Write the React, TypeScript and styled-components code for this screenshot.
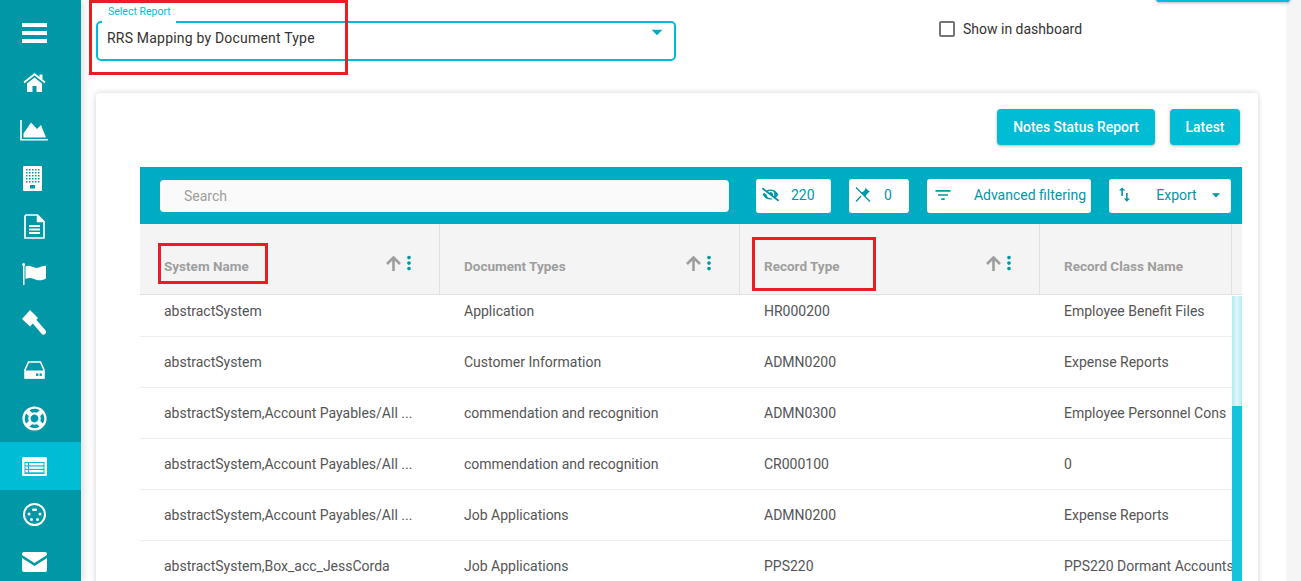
import React from 'react';
import styled, {createGlobalStyle} from 'styled-components';
import {FaRegLifeRing, FaEyeSlash} from 'react-icons/fa';
import {MdFilterList, MdMoreVert, MdSwapVert, MdArrowDropDown} from 'react-icons/md';

interface Row {
    system: string;
    document: string;
    record: string;
    recordClass: string;
}

const rows: Row[] = [
    {system: 'abstractSystem', document: 'Application', record: 'HR000200', recordClass: 'Employee Benefit Files'},
    {system: 'abstractSystem', document: 'Customer Information', record: 'ADMN0200', recordClass: 'Expense Reports'},
    {system: 'abstractSystem,Account Payables/All ...', document: 'commendation and recognition', record: 'ADMN0300', recordClass: 'Employee Personnel Cons'},
    {system: 'abstractSystem,Account Payables/All ...', document: 'commendation and recognition', record: 'CR000100', recordClass: '0'},
    {system: 'abstractSystem,Account Payables/All ...', document: 'Job Applications', record: 'ADMN0200', recordClass: 'Expense Reports'},
    {system: 'abstractSystem,Box_acc_JessCorda', document: 'Job Applications', record: 'PPS220', recordClass: 'PPS220 Dormant Accounts'},
];

const SIDE_BG = '#0097a7';

const BarsIcon = () => (
    <svg width="25" height="20" viewBox="0 0 25 20" fill="#fff">
        <rect width="25" height="4"/>
        <rect y="8" width="25" height="4"/>
        <rect y="16" width="25" height="4"/>
    </svg>
);

const HomeIcon = () => (
    <svg width="23" height="19" viewBox="0 0 23 19" fill="#fff">
        <path d="M4 10.5l7.5-6 7.5 6V19h-5.500v-6h-4v6H4z"/>
        <path d="M1 9.500l10.500-8.300L22 9.500" fill="none" stroke="#fff" strokeWidth="1.800"/>
        <rect x="16.500" y="1.500" width="3" height="4.500"/>
    </svg>
);

const ChartIcon = () => (
    <svg width="28" height="21" viewBox="0 0 28 21" fill="#fff">
        <path d="M1 0v19.700h27" fill="none" stroke="#fff" strokeWidth="1.600"/>
        <path d="M3.500 17.500v-4L11 2.500l6 6.500 4-4 5 12.500z"/>
    </svg>
);

const BuildingIcon = () => (
    <svg width="22" height="25" viewBox="0 0 22 25" fill="#fff">
        <rect width="19" height="25" rx="1"/>
        {[3, 6, 9, 12, 15].map(y =>
            [3, 6, 9, 12, 15].map(x => (
                <rect key={`${x}-${y}`} x={x} y={y} width="1.500" height="1.500" fill={SIDE_BG}/>
            ))
        )}
        <rect x="7" y="19" width="5" height="3.500" fill={SIDE_BG}/>
    </svg>
);

const DocIcon = () => (
    <svg width="21" height="25" viewBox="0 0 21 25" fill="none" stroke="#fff">
        <path d="M2 1h11.500L20 7.500V24H1V2z" strokeWidth="1.700"/>
        <path d="M13 1v7h7z" fill="#fff" strokeWidth="0.500"/>
        <path d="M5 12h11M5 15.500h11M5 19h11" strokeWidth="1.800"/>
    </svg>
);

const FlagIcon = () => (
    <svg width="24" height="22" viewBox="0 0 24 22" fill="#fff">
        <rect x="1" y="1" width="1.500" height="21"/>
        <circle cx="1.700" cy="1.500" r="1.500"/>
        <path d="M3.500 3.500C8 1 12 6.500 17 4.500c2.500-1 4.500-1.500 7-2v13c-3 1.500-7 3-12 .5-3-1.500-5.500-1.500-8.500 0z"/>
    </svg>
);

const GavelIcon = () => (
    <svg width="24" height="25" viewBox="0 0 24 25" fill="#fff">
        <path d="M8 0l8 8-8 8.500L0 9z"/>
        <path d="M12 11l9.500 11" fill="none" stroke="#fff" strokeWidth="5" strokeLinecap="round"/>
    </svg>
);

const HddIcon = () => (
    <svg width="21" height="18" viewBox="0 0 21 18" fill="none">
        <path d="M4.500 1h12L20 9v8H1V9z" stroke="#fff" strokeWidth="1.600"/>
        <rect x="1" y="9.500" width="19" height="8" fill="#fff"/>
        <rect x="12" y="12.500" width="2.400" height="2.400" fill={SIDE_BG}/>
        <rect x="15.500" y="12.500" width="2.400" height="2.400" fill={SIDE_BG}/>
    </svg>
);

const ListIcon = () => (
    <svg width="25" height="19" viewBox="0 0 25 19" fill="#fff">
        <rect width="25" height="19" rx="1.500"/>
        <rect x="2.500" y="5" width="20" height="12" fill="#00bcd4"/>
        {[6, 9.500, 13].map(y => (
            <React.Fragment key={y}>
                <rect x="3.500" y={y} width="2.500" height="2.300"/>
                <rect x="7" y={y} width="14.500" height="2.300"/>
            </React.Fragment>
        ))}
    </svg>
);

const PlugIcon = () => (
    <svg width="23" height="23" viewBox="0 0 23 23" fill="#fff">
        <circle cx="11.500" cy="11.500" r="10.500" fill="none" stroke="#fff" strokeWidth="2"/>
        <rect x="9" y="5.500" width="5" height="2.400" rx="1"/>
        <circle cx="6" cy="11" r="1.500"/>
        <circle cx="17" cy="11" r="1.500"/>
        <circle cx="8.500" cy="16.500" r="1.500"/>
        <circle cx="14.500" cy="16.500" r="1.500"/>
    </svg>
);

const EnvelopeIcon = () => (
    <svg width="25" height="20" viewBox="0 0 25 20" fill="#fff">
        <path d="M2 0h21a2 2 0 0 1 2 2v1L12.500 11 0 3V2a2 2 0 0 1 2-2z"/>
        <path d="M0 6l12.500 8L25 6v12a2 2 0 0 1-2 2H2a2 2 0 0 1-2-2z"/>
    </svg>
);

const UnpinIcon = () => (
    <svg width="16" height="15" viewBox="0 0 16 15" fill="none">
        <path d="M10 .5l5 4.500-1.500.4-2.500 2.500-.5 2-4.500-4.500 2-.6 2.500-2.500z" fill="#0097a7"/>
        <path d="M1 .5l14 14M6 9l-5 5.500" stroke="#0097a7" strokeWidth="1.300"/>
    </svg>
);

const SortArrow = () => (
    <svg width="15" height="15" viewBox="0 0 15 15" fill="none" stroke="#9e9e9e" strokeWidth="2.600">
        <path d="M7.500 15V2M1 8l6.500-6.500L14 8"/>
    </svg>
);

const navIcons = [
    <HomeIcon/>, <ChartIcon/>, <BuildingIcon/>, <DocIcon/>, <FlagIcon/>, <GavelIcon/>,
    <HddIcon/>, <FaRegLifeRing size={25}/>, <ListIcon/>, <PlugIcon/>, <EnvelopeIcon/>,
];

const App: React.FC = () => (
    <Shell>
        <GlobalStyle/>
        <Sidebar>
            <MenuItem><BarsIcon/></MenuItem>
            {navIcons.map((icon, i) => (
                <NavItem key={i} $active={i === 8}>{icon}</NavItem>
            ))}
        </Sidebar>
        <Main>
            <TopButtonEdge/>
            <TopBar>
                <SelectField>
                    <SelectLabel>Select Report</SelectLabel>
                    <SelectValue>RRS Mapping by Document Type</SelectValue>
                    <SelectCaret><MdArrowDropDown/></SelectCaret>
                    <Highlight $left={-9} $top={-23} $width={259} $height={75}/>
                </SelectField>
                <CheckLabel>
                    <CheckBox/>
                    Show in dashboard
                </CheckLabel>
            </TopBar>
            <Card>
                <CardActions>
                    <ActionButton $width={158}>Notes Status Report</ActionButton>
                    <ActionButton $width={70}>Latest</ActionButton>
                </CardActions>
                <Table>
                    <Toolbar>
                        <Search>Search</Search>
                        <ToolButton $width={75} $gap={12}><FaEyeSlash size={17}/>220</ToolButton>
                        <ToolButton $width={60} $gap={13}><UnpinIcon/>0</ToolButton>
                        <ToolButton $width={164} $between><MdFilterList size={20}/>Advanced filtering</ToolButton>
                        <ToolButton $width={122} $between>
                            <MdSwapVert size={19}/>
                            <ExportText>Export</ExportText>
                            <MdArrowDropDown size={20}/>
                        </ToolButton>
                    </Toolbar>
                    <HeaderRow>
                        <HeaderCell>
                            <HeaderText>System Name</HeaderText>
                            <SortIcons/>
                            <Highlight $left={18} $top={19} $width={110} $height={41}/>
                        </HeaderCell>
                        <HeaderCell>
                            <HeaderText>Document Types</HeaderText>
                            <SortIcons/>
                        </HeaderCell>
                        <HeaderCell>
                            <HeaderText>Record Type</HeaderText>
                            <SortIcons/>
                            <Highlight $left={12} $top={13} $width={124} $height={54}/>
                        </HeaderCell>
                        <HeaderCell $last>
                            <HeaderText>Record Class Name</HeaderText>
                        </HeaderCell>
                    </HeaderRow>
                    <BodyWrap>
                        <Body>
                            {rows.map((row, i) => (
                                <BodyRow key={i}>
                                    <BodyCell>{row.system}</BodyCell>
                                    <BodyCell>{row.document}</BodyCell>
                                    <BodyCell>{row.record}</BodyCell>
                                    <BodyCell $last>{row.recordClass}</BodyCell>
                                </BodyRow>
                            ))}
                        </Body>
                        <ScrollTrack><ScrollThumb/></ScrollTrack>
                    </BodyWrap>
                </Table>
            </Card>
        </Main>
        <PageScrollbar/>
    </Shell>
);

const SortIcons = () => (
    <SortWrap>
        <SortArrow/>
        <DotsWrap><MdMoreVert size={22} color="#0097a7"/></DotsWrap>
    </SortWrap>
);

const GlobalStyle = createGlobalStyle`
  html, body {
    margin: 0;
    height: 100%;
    overflow: hidden;
    background: #fff;
    font-family: Roboto, "Liberation Sans", sans-serif;
  }
`;

const Shell = styled.div`
  display: flex;
  width: 1301px;
  height: 581px;
  overflow: hidden;
`;

const Sidebar = styled.nav`
  flex: 0 0 81px;
  display: flex;
  flex-direction: column;
  background: ${SIDE_BG};
  box-shadow: 2px 0 8px rgba(0, 0, 0, 0.15);
  z-index: 1;
`;

const MenuItem = styled.div`
  flex: 0 0 58px;
  display: flex;
  justify-content: center;
  box-sizing: border-box;
  padding: 23px 13px 0 0;
`;

const NavItem = styled.div<{ $active?: boolean }>`
  flex: 0 0 48px;
  display: flex;
  align-items: center;
  justify-content: center;
  box-sizing: border-box;
  padding-right: 13px;
  color: #fff;
  background: ${p => (p.$active ? '#00bcd4' : 'transparent')};
`;

const Main = styled.main`
  position: relative;
  flex: 1;
  min-width: 0;
  padding: 0 28px 0 15px;
`;

const TopButtonEdge = styled.div`
  position: absolute;
  top: -8px;
  left: 1075px;
  width: 134px;
  height: 10px;
  background: #00bcd4;
  border-radius: 3px;
  box-shadow: 0 1px 3px rgba(0, 0, 0, 0.3);
`;

const TopBar = styled.div`
  display: flex;
  align-items: flex-start;
  height: 93px;
  padding-top: 21px;
  box-sizing: border-box;
`;

const SelectField = styled.div`
  position: relative;
  width: 580px;
  height: 40px;
  box-sizing: border-box;
  border: 2px solid #00bcd4;
  border-radius: 5px;
  display: flex;
  align-items: center;
  padding: 0 0 7px 9px;
`;

const SelectLabel = styled.span`
  position: absolute;
  top: -19px;
  left: 4px;
  padding: 0 5px 6px 6px;
  background: #fff;
  color: #00bcd4;
  font-size: 10.5px;
  line-height: 15px;
`;

const SelectValue = styled.span`
  font-size: 14px;
  color: #333;
  letter-spacing: 0.2px;
`;

const SelectCaret = styled.span`
  position: absolute;
  right: 4px;
  top: -4px;
  color: #00acc1;
  font-size: 26px;
  line-height: 1;
`;

const Highlight = styled.div<{ $left: number; $top: number; $width: number; $height: number }>`
  position: absolute;
  left: ${p => p.$left}px;
  top: ${p => p.$top}px;
  width: ${p => p.$width}px;
  height: ${p => p.$height}px;
  box-sizing: border-box;
  border: 3px solid #ed1c24;
  pointer-events: none;
`;

const CheckLabel = styled.label`
  display: flex;
  align-items: center;
  gap: 8px;
  margin: 0 0 0 263px;
  height: 16px;
  font-size: 14px;
  color: #333;
`;

const CheckBox = styled.span`
  width: 16px;
  height: 16px;
  box-sizing: border-box;
  border: 2px solid #757575;
  border-radius: 2px;
`;

const Card = styled.section`
  background: #fff;
  border-radius: 4px;
  box-shadow: 0 0 6px rgba(0, 0, 0, 0.18);
  padding: 16px 16px 0 44px;
  height: 520px;
`;

const CardActions = styled.div`
  display: flex;
  justify-content: flex-end;
  gap: 15px;
  margin-bottom: 22px;
  padding-right: 2px;
`;

const ActionButton = styled.button<{ $width: number }>`
  width: ${p => p.$width}px;
  height: 36px;
  padding: 0;
  border: none;
  border-radius: 4px;
  background: #00bcd4;
  color: #fff;
  font: 500 13.9px Roboto, sans-serif;
  box-shadow: 0 1px 3px rgba(0, 0, 0, 0.3);
`;

const Table = styled.div`
  width: 1102px;
`;

const Toolbar = styled.div`
  display: flex;
  align-items: center;
  gap: 18px;
  height: 57px;
  padding: 0 11px 0 20px;
  background: #00acc1;
  box-sizing: border-box;
`;

const Search = styled.div`
  flex: 1;
  height: 32px;
  line-height: 33px;
  margin-right: 9px;
  padding-left: 24px;
  border-radius: 4px;
  background: #fafafa;
  color: #9e9e9e;
  font-size: 14px;
`;

const ToolButton = styled.div<{ $width: number; $gap?: number; $between?: boolean }>`
  flex: 0 0 ${p => p.$width}px;
  height: 34px;
  box-sizing: border-box;
  display: flex;
  align-items: center;
  justify-content: ${p => (p.$between ? 'space-between' : 'flex-start')};
  gap: ${p => p.$gap ?? 0}px;
  padding: 0 5px 2px 6px;
  border-radius: 3px;
  background: #fff;
  color: #0097a7;
  font-size: 14px;
`;

const ExportText = styled.span`
  margin-left: 13px;
`;

const HeaderRow = styled.div`
  display: flex;
  height: 71px;
  background: #f4f4f4;
  border-bottom: 1px solid #e0e0e0;
  box-sizing: border-box;
`;

const HeaderCell = styled.div<{ $last?: boolean }>`
  position: relative;
  flex: 0 0 ${p => (p.$last ? 192 : 300)}px;
  box-sizing: border-box;
  padding: 32px 0 0 24px;
  border-right: 1px solid #e0e0e0;
`;

const HeaderText = styled.span`
  font-size: 13.5px;
  line-height: 16px;
  font-weight: 700;
  color: #9e9e9e;
`;

const SortWrap = styled.div`
  position: absolute;
  top: 28px;
  right: 26px;
  display: flex;
  align-items: center;
`;

const DotsWrap = styled.span`
  display: flex;
  margin: 0 -7px 0 -3px;
`;

const BodyWrap = styled.div`
  display: flex;
  height: 300px;
  overflow: hidden;
  background: #fff;
`;

const Body = styled.div`
  flex: 0 0 1092px;
  margin-top: -9px;
`;

const BodyRow = styled.div`
  display: flex;
  height: 51px;
  box-sizing: border-box;
  border-bottom: 1px solid #eeeeee;
`;

const BodyCell = styled.div<{ $last?: boolean }>`
  flex: 0 0 ${p => (p.$last ? 192 : 300)}px;
  box-sizing: border-box;
  padding-left: 24px;
  font-size: 14px;
  line-height: 50px;
  color: #555;
  white-space: nowrap;
  overflow: hidden;
`;

const ScrollTrack = styled.div`
  flex: 0 0 10px;
  margin-top: 1px;
  background: linear-gradient(90deg, #b2ebf2, #e0f7fa 50%, #b2ebf2);
`;

const ScrollThumb = styled.div`
  margin-top: 110px;
  height: 200px;
  background: #17c3d9;
`;

const PageScrollbar = styled.div`
  flex: 0 0 15px;
  background: #f5f5f5;
`;

export default App;
